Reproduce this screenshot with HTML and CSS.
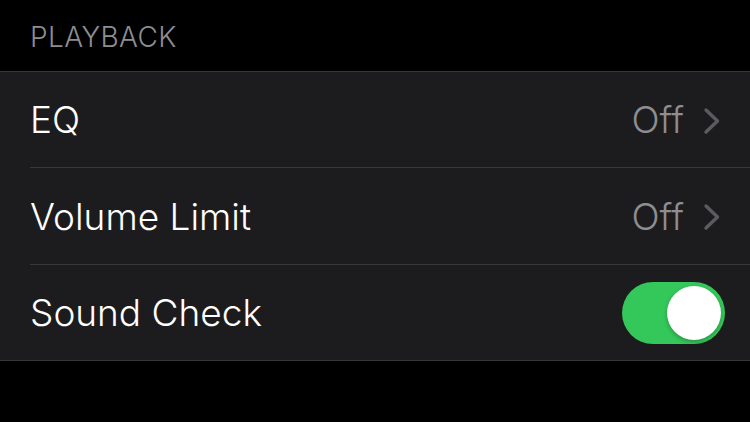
FILE: index.html
```html
<!DOCTYPE html>
<html>
<head>
<meta charset="utf-8">
<link rel="stylesheet" href="styles.css">
</head>
<body>
<div class="header">PLAYBACK</div>
<div class="group">
  <div class="row">
    <div class="inner sep">
      <span class="label">EQ</span>
      <span class="value">Off</span>
      <svg class="chev" width="18" height="28" viewBox="0 0 18 28"><path d="M3 3 L14.5 14 L3 25" fill="none" stroke="#5b5b60" stroke-width="3.4" stroke-linecap="round" stroke-linejoin="round"/></svg>
    </div>
  </div>
  <div class="row">
    <div class="inner sep">
      <span class="label">Volume Limit</span>
      <span class="value">Off</span>
      <svg class="chev" width="18" height="28" viewBox="0 0 18 28"><path d="M3 3 L14.5 14 L3 25" fill="none" stroke="#5b5b60" stroke-width="3.4" stroke-linecap="round" stroke-linejoin="round"/></svg>
    </div>
  </div>
  <div class="row">
    <div class="inner last">
      <span class="label">Sound Check</span>
      <div class="toggle"><div class="knob"></div></div>
    </div>
  </div>
</div>
</body>
</html>
```
FILE: styles.css
```css
html, body {
  margin: 0;
  padding: 0;
  background: #000;
  font-family: Inter, "Noto Sans", sans-serif;
  -webkit-font-smoothing: antialiased;
}
.header {
  height: 71px;
  box-sizing: border-box;
  padding: 21px 0 0 30px;
  font-size: 28px;
  line-height: 32px;
  color: #8d8d92;
  letter-spacing: 0.4px;
  font-weight: 350;
}
.group {
  background: #1c1c1e;
  border-top: 1px solid #363638;
  border-bottom: 1px solid #363638;
}
.row {
  padding-left: 30px;
}
.inner {
  height: 96px;
  display: flex;
  align-items: center;
  padding-right: 29px;
  box-sizing: border-box;
}
.inner.sep {
  border-bottom: 1px solid #38383a;
}
.inner.last {
  height: 95px;
  padding-right: 25px;
}
.row:nth-child(2) .inner { height: 97px; }
.label {
  flex: 1;
  font-size: 37px;
  font-weight: 350;
  color: #fff;
}
.value {
  font-size: 37px;
  font-weight: 350;
  color: #8d8d92;
  margin-right: 19px;
}
.chev {
  display: block;
  margin-top: 2px;
}
.toggle {
  width: 103px;
  height: 62px;
  border-radius: 31px;
  background: #34c759;
  display: flex;
  justify-content: flex-end;
  align-items: center;
  padding: 0 4px;
  box-sizing: border-box;
}
.knob {
  width: 54px;
  height: 54px;
  border-radius: 50%;
  background: #fff;
  box-shadow: 0 2px 4px rgba(0,0,0,0.25);
}
```
